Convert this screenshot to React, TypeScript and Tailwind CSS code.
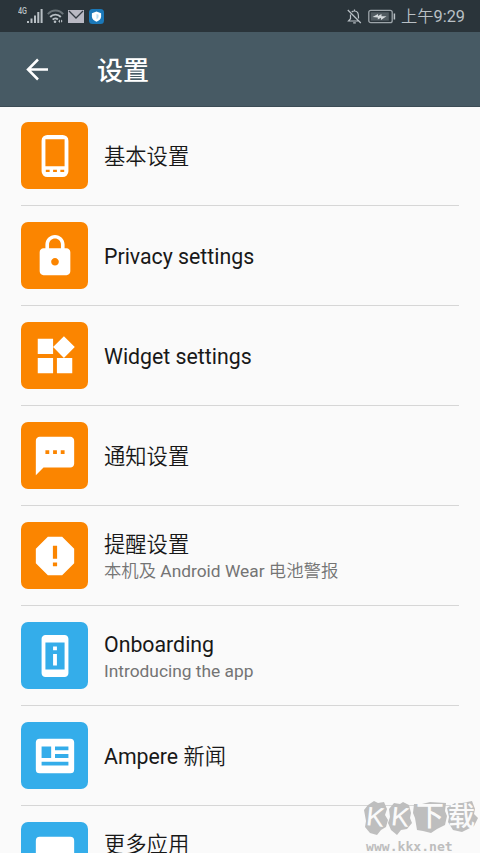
import type { ReactNode } from 'react';

type Item = {
  title: string;
  subtitle?: string;
  twoLine?: boolean;
  color: string;
  icon: ReactNode;
};

const ORANGE = 'bg-[#fb8500]';
const BLUE = 'bg-[#34adea]';

const items: Item[] = [
  {
    title: '基本设置',
    color: ORANGE,
    icon: (
      <path d="M8 1h8a3 3 0 0 1 3 3v16a3 3 0 0 1-3 3H8a3 3 0 0 1-3-3V4a3 3 0 0 1 3-3zM7 3.3v14.1h10V3.3zM7.2 19.2v1.1h2v-1.1zm3.8 0v1.1h2v-1.1zm3.8 0v1.1h2v-1.1z" />
    ),
  },
  {
    title: 'Privacy settings',
    color: ORANGE,
    icon: (
      <path d="M18 8h-1V6c0-2.76-2.24-5-5-5S7 3.24 7 6v2H6c-1.1 0-2 .9-2 2v10c0 1.1.9 2 2 2h12c1.1 0 2-.9 2-2V10c0-1.1-.9-2-2-2zm-6 9c-1.1 0-2-.9-2-2s.9-2 2-2 2 .9 2 2-.9 2-2 2zm3.1-9H8.9V6c0-1.71 1.39-3.1 3.1-3.1s3.1 1.39 3.1 3.1v2z" />
    ),
  },
  {
    title: 'Widget settings',
    color: ORANGE,
    icon: <path d="M13 13v8h8v-8h-8zM3 21h8v-8H3v8zM3 3v8h8V3H3zm13.66-1.31L11 7.34 16.66 13l5.66-5.66-5.66-5.65z" />,
  },
  {
    title: '通知设置',
    color: ORANGE,
    icon: (
      <path d="M20 2H4c-1.1 0-1.99.9-1.99 2L2 22l4-4h14c1.1 0 2-.9 2-2V4c0-1.1-.9-2-2-2zM9 11H7V9h2v2zm4 0h-2V9h2v2zm4 0h-2V9h2v2z" />
    ),
  },
  {
    title: '提醒设置',
    subtitle: '本机及 Android Wear 电池警报',
    twoLine: true,
    color: ORANGE,
    icon: (
      <path d="M15.73 2H8.27L2 8.27v7.46L8.27 22h7.46L22 15.73V8.27L15.73 2zM13.1 17.4h-2.2v-2h2.2v2zm0-4h-2.2V6.6h2.2v6.8z" />
    ),
  },
  {
    title: 'Onboarding',
    subtitle: 'Introducing the app',
    twoLine: true,
    color: BLUE,
    icon: (
      <path d="M13 7h-2v2h2V7zm0 4h-2v6h2v-6zm4-9.99L7 1c-1.1 0-2 .9-2 2v18c0 1.1.9 2 2 2h10c1.1 0 2-.9 2-2V3c0-1.1-.9-1.99-2-1.99zM17 19H7V5h10v14z" />
    ),
  },
  {
    title: 'Ampere 新闻',
    color: BLUE,
    icon: (
      <path d="M4 3h16a2 2 0 0 1 2 2v14a2 2 0 0 1-2 2H4a2 2 0 0 1-2-2V5a2 2 0 0 1 2-2zM5 7v6h5V7zm7 0v2h7V7zm0 4v2h7v-2zM5 15v2h14v-2z" />
    ),
  },
  {
    title: '更多应用',
    twoLine: true,
    color: BLUE,
    icon: <path d="M4 2h16a2 2 0 0 1 2 2v14a2 2 0 0 1-2 2H4a2 2 0 0 1-2-2V4a2 2 0 0 1 2-2z" />,
  },
];

// Han characters use a slightly lighter cut than the Latin text beside them
function Label({ text }: { text: string }) {
  return text.split(/([\u4e00-\u9fff]+)/).map((part, i) =>
    i % 2 ? (
      <span key={i} className="font-[350]">
        {part}
      </span>
    ) : (
      part
    ),
  );
}

function StatusBar() {
  return (
    <div className="flex h-8 items-center justify-between bg-[#2a343a] pl-[18px] pr-4 text-[#b9c0c5]">
      <div className="flex h-8 items-center">
        <span className="-mt-[9px] w-[9px] origin-left scale-x-85 text-[8.5px] font-medium leading-none tracking-[-0.2px]">
          4G
        </span>
        <svg className="h-4 w-[16px]" viewBox="0 0 16 16" fill="currentColor">
          <path d="M0 13h2v2H0zM3.5 10.5h2V15h-2zM7 7.5h2V15H7zM10.3 4h2v11h-2zM13.6 1h2v14h-2z" />
        </svg>
        <svg className="ml-1 h-4 w-[17px]" viewBox="0 0 17 16" fill="none" stroke="currentColor" strokeWidth="1.9">
          <path d="M.8 6.2C5 1.2 12 1.2 16.2 6.2" opacity=".45" />
          <path d="M3.2 9C6 5.8 11 5.8 13.8 9M5.7 11.7C7.2 10 9.4 10 10.8 11.5" />
          <circle cx="8" cy="13.8" r="1.3" fill="currentColor" stroke="none" />
          <path d="M11.2 13.2l1.8-1.8v3.6zM14 11.5l1.6 1.6-1.6 1.6z" fill="currentColor" stroke="none" />
        </svg>
        <svg className="ml-1 h-[13px] w-4" viewBox="0 0 16 13">
          <path d="M0 0h16v13H0z" fill="#b9b9c3" />
          <path d="M1 1l7 7 7-7" fill="none" stroke="#343c44" strokeWidth="1.3" />
        </svg>
        <svg className="ml-[5px] h-[15px] w-[15px]" viewBox="0 0 15 15">
          <rect width="15" height="15" rx="3.5" fill="#1b78b8" />
          <path d="M7.5 2.6l4.6 1.6v3.4c0 2.5-2 4.2-4.6 5.2-2.6-1-4.6-2.7-4.6-5.2V4.2z" fill="#fff" />
          <path d="M7.5 5l2 .7v2c0 1.3-.9 2-2 2.6z" fill="#b5dcf2" />
        </svg>
      </div>
      <div className="flex h-8 items-center">
        <svg className="h-[15px] w-[15px]" viewBox="0 0 15 15" fill="none" stroke="currentColor" strokeWidth="1.2">
          <path d="M3.5 5.5v4.2L1.5 12h11M4.8 3C6 1.6 9 1.6 10.5 3.3c1 1.3 1 3.2 1 6.2M7.5 2V.5M6.2 13.8h2.6M.8 1l13 13" />
        </svg>
        <svg className="ml-1.5 h-[15px] w-[28px]" viewBox="0 0 28 15" fill="none" stroke="#9da5aa">
          <rect x=".8" y="1.3" width="23.4" height="12.4" rx="2" strokeWidth="1.3" />
          <rect x="2.8" y="3.3" width="18" height="8.4" fill="#515b61" stroke="none" />
          <path d="M4.5 8l5.5-3v2l3.5-2v2.2h5L13 11V8.8l-3.2 1.8V8.4z" fill="#d4d9dc" stroke="none" />
          <path d="M26.4 4.5v6" stroke="#b9c0c5" strokeWidth="1.5" />
        </svg>
        <span className="ml-[5px] mt-0.5 w-[63px] whitespace-nowrap text-[16.3px] leading-8">
          <Label text="上午9:29" />
        </span>
      </div>
    </div>
  );
}

function Header() {
  return (
    <header className="flex h-[75px] items-center border-b border-[#3c4c55] bg-[#475a64] pl-[26px] text-white">
      <svg className="h-[23px] w-[23px]" viewBox="0 0 23 23" fill="none" stroke="currentColor" strokeWidth="2.5">
        <path d="M22 11.5H2.5M12 1.5l-10 10 10 10" />
      </svg>
      <h1 className="ml-12 mt-1 text-[26px] font-medium leading-none">设置</h1>
    </header>
  );
}

function Row({ title, subtitle, twoLine, color, icon }: Item) {
  return (
    <li className="flex h-[100px] shrink-0 items-start border-b-[1.5px] border-[#d6d6d6] pt-4">
      <div className={`flex h-[67px] w-[67px] shrink-0 items-center justify-center rounded-[7px] ${color}`}>
        <svg className="h-[46px] w-[46px]" viewBox="0 0 24 24" fill="#fff" fillRule="evenodd">
          {icon}
        </svg>
      </div>
      <div className={`ml-4 flex h-[67px] flex-col whitespace-nowrap ${twoLine ? 'pt-[9px]' : 'pt-[21px]'}`}>
        <div className="text-[21.3px] leading-7 text-[#181818]">
          <Label text={title} />
        </div>
        {subtitle && (
          <div className="-mt-px text-[17.35px] leading-[26px] text-[#747474]">
            <Label text={subtitle} />
          </div>
        )}
      </div>
    </li>
  );
}

function Watermark() {
  return (
    <div className="absolute left-[364px] top-[799px] h-[54px] w-[116px]">
      <svg className="absolute inset-0 h-[54px] w-[116px]" viewBox="0 0 116 54" fill="#bebebe">
        <path d="M0 11l4-5 6-4 4 2 6-1 3 7-2 6 3 5-2 7-5 3-4 5-7-2-5-6 1-6z" />
        <path d="M25 10l5-6 6 1 3-2 6 3 2 8-1 5 2 5-5 6-6 1-4 5-6-5-3-7 2-6z" />
        <path d="M50 5l8 0 8-2 16 1-1 8 2 5-2 9-8 4-6 4-8-2-6-1-2-12-2-5z" />
        <path d="M83 9l8-5 7 0 10-2 3 8-1 5 4 4-4 8-6 3-6 3-9-2-5-8 1-5z" />
      </svg>
      <div className="relative flex h-[36px] items-center text-[26px] leading-none text-[#fafafa]">
        <span className="w-[24px] pl-[3px]">
          <span className="inline-block rotate-6 scale-x-110">K</span>
        </span>
        <span className="w-[25px] pl-[4px]">
          <span className="inline-block rotate-6 scale-x-110">K</span>
        </span>
        <span className="w-[34px] pl-[3px] text-[28px] font-medium">下</span>
        <span className="pl-px text-[27px] font-medium">载</span>
      </div>
      <div className="relative ml-0.5 mt-[5px] font-['DejaVu_Sans_Mono'] text-[13.1px] font-bold leading-[13px] text-[#bebebe]">
        www.kkx.net
      </div>
    </div>
  );
}

export default function App() {
  return (
    <div className="relative h-[853px] w-[480px] overflow-hidden bg-[#fafafa] font-[Roboto,'Noto_Sans_CJK_SC',sans-serif]">
      <StatusBar />
      <Header />
      <ul className="-mt-px flex flex-col pl-[21px] pr-[21px]">
        {items.map((item) => (
          <Row key={item.title} {...item} />
        ))}
      </ul>
      <Watermark />
    </div>
  );
}
